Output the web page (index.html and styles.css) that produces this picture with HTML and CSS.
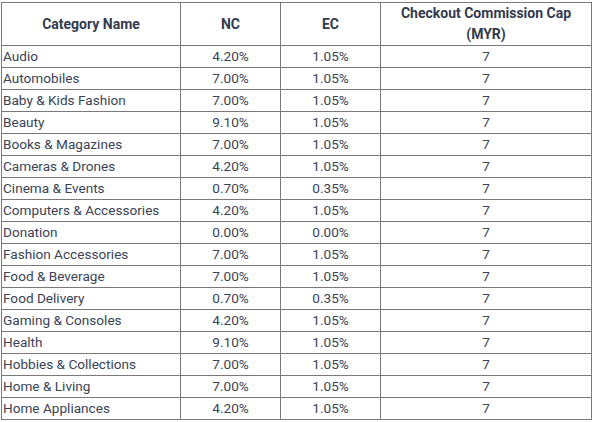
FILE: index.html
```html
<!DOCTYPE html>
<html>
<head>
<meta charset="utf-8">
<link rel="stylesheet" href="styles.css">
</head>
<body>
<table class="rates">
  <colgroup>
    <col class="c-name">
    <col class="c-nc">
    <col class="c-ec">
    <col class="c-cap">
  </colgroup>
  <thead>
    <tr>
      <th>Category Name</th>
      <th>NC</th>
      <th>EC</th>
      <th>Checkout Commission Cap<br>(MYR)</th>
    </tr>
  </thead>
  <tbody>
    <tr><td>Audio</td><td>4.20%</td><td>1.05%</td><td>7</td></tr>
    <tr><td>Automobiles</td><td>7.00%</td><td>1.05%</td><td>7</td></tr>
    <tr><td>Baby &amp; Kids Fashion</td><td>7.00%</td><td>1.05%</td><td>7</td></tr>
    <tr><td>Beauty</td><td>9.10%</td><td>1.05%</td><td>7</td></tr>
    <tr><td>Books &amp; Magazines</td><td>7.00%</td><td>1.05%</td><td>7</td></tr>
    <tr><td>Cameras &amp; Drones</td><td>4.20%</td><td>1.05%</td><td>7</td></tr>
    <tr><td>Cinema &amp; Events</td><td>0.70%</td><td>0.35%</td><td>7</td></tr>
    <tr><td>Computers &amp; Accessories</td><td>4.20%</td><td>1.05%</td><td>7</td></tr>
    <tr><td>Donation</td><td>0.00%</td><td>0.00%</td><td>7</td></tr>
    <tr><td>Fashion Accessories</td><td>7.00%</td><td>1.05%</td><td>7</td></tr>
    <tr><td>Food &amp; Beverage</td><td>7.00%</td><td>1.05%</td><td>7</td></tr>
    <tr><td>Food Delivery</td><td>0.70%</td><td>0.35%</td><td>7</td></tr>
    <tr><td>Gaming &amp; Consoles</td><td>4.20%</td><td>1.05%</td><td>7</td></tr>
    <tr><td>Health</td><td>9.10%</td><td>1.05%</td><td>7</td></tr>
    <tr><td>Hobbies &amp; Collections</td><td>7.00%</td><td>1.05%</td><td>7</td></tr>
    <tr><td>Home &amp; Living</td><td>7.00%</td><td>1.05%</td><td>7</td></tr>
    <tr><td>Home Appliances</td><td>4.20%</td><td>1.05%</td><td>7</td></tr>
  </tbody>
</table>
</body>
</html>
```

FILE: styles.css
```css
html, body {
  margin: 0;
  padding: 0;
  background: #ffffff;
}
body {
  padding: 2px 0 0 1px;
  font-family: Roboto, "Liberation Sans", sans-serif;
  color: #3a4356;
}
.rates {
  border-collapse: collapse;
  table-layout: fixed;
  width: 591px;
  font-size: 13.6px;
}
.c-name { width: 179px; }
.c-nc { width: 100px; }
.c-ec { width: 100px; }
.c-cap { width: 211px; }
.rates th,
.rates td {
  border: 1px solid #7a7a7a;
  padding: 0 1px;
  height: 21px;
  line-height: 21px;
  white-space: nowrap;
  vertical-align: middle;
}
.rates th {
  font-size: 14px;
  font-weight: 700;
  color: #333b4d;
  text-align: center;
  line-height: 21px;
  height: 42px;
}
.rates td { text-align: center; }
.rates td:first-child { text-align: left; }
```
